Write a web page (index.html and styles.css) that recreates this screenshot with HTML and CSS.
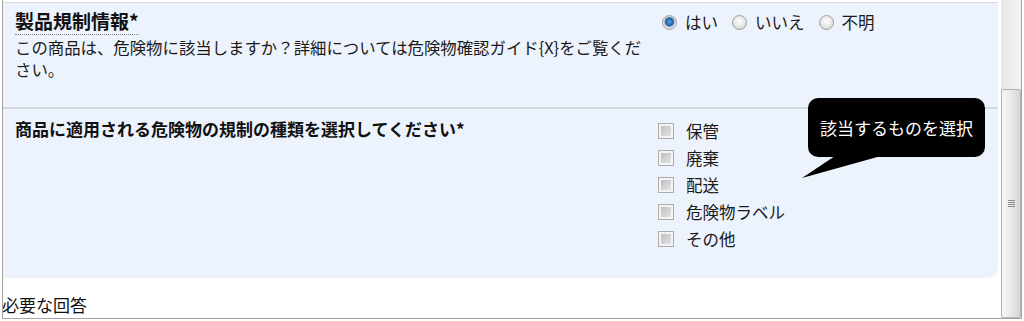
FILE: index.html
```html
<!DOCTYPE html>
<html lang="ja">
<head>
  <meta charset="UTF-8">
  <meta name="viewport" content="width=device-width, initial-scale=1.0">
  <title>製品規制情報</title>
  <link rel="stylesheet" href="styles.css">
</head>
<body>
  <div class="frame">
    <div class="content">
      <!-- Dangerous goods question -->
      <div class="section section-info">
        <div class="field-label">
          <h2 class="field-title"><span class="term">製品規制情報*</span></h2>
          <p class="field-help">この商品は、危険物に該当しますか？詳細については危険物確認ガイド{X}をご覧ください。</p>
        </div>
        <div class="field-input radio-group">
          <label class="choice"><input type="radio" name="dg" checked>はい</label>
          <label class="choice"><input type="radio" name="dg">いいえ</label>
          <label class="choice"><input type="radio" name="dg">不明</label>
        </div>
      </div>

      <!-- Regulation types -->
      <div class="section section-types">
        <div class="field-label">
          <h2 class="field-title">商品に適用される危険物の規制の種類を選択してください*</h2>
        </div>
        <div class="field-input check-list">
          <label class="check"><input type="checkbox">保管</label>
          <label class="check"><input type="checkbox">廃棄</label>
          <label class="check"><input type="checkbox">配送</label>
          <label class="check"><input type="checkbox">危険物ラベル</label>
          <label class="check"><input type="checkbox">その他</label>
        </div>
      </div>

      <p class="required-note">必要な回答</p>

      <!-- Callout -->
      <div class="tooltip">
        該当するものを選択
        <svg class="tooltip-tail" width="90" height="24" viewBox="0 0 90 24">
          <polygon points="38,0 84,0 5,22" fill="#000"/>
        </svg>
      </div>
    </div>

    <div class="scrollbar">
      <div class="scroll-thumb"><span class="grip"></span></div>
    </div>
  </div>
</body>
</html>
```

FILE: styles.css
```css
html, body {
  margin: 0;
  padding: 0;
  background: #fff;
}
body {
  font-family: "Noto Sans CJK JP", "Noto Sans", sans-serif;
  color: #1a1a1a;
  font-size: 16px;
}
.frame {
  box-sizing: border-box;
  margin-left: 2px;
  width: 1020px;
  height: 319px;
  border-left: 1px solid #a3a3a3;
  border-right: 1px solid #a3a3a3;
  border-bottom: 1px solid #a3a3a3;
  display: flex;
  overflow: hidden;
}
.content {
  position: relative;
  flex: 1;
  padding-top: 2px;
}
.section {
  display: grid;
  grid-template-columns: 643px 1fr;
  background: #edf3fd;
  padding-left: 12px;
  margin-right: 3px;
}
.section-info {
  border-top: 1px solid #d6dbe1;
  border-bottom: 2px solid #d3d8df;
  height: 104px;
  box-sizing: content-box;
}
.section-types {
  height: 169px;
  border-bottom-right-radius: 10px;
}
.field-title {
  margin: 0;
  font-size: 17px;
  font-weight: bold;
  line-height: 22px;
  color: #111;
}
.section-info .field-title {
  font-size: 19px;
  padding-top: 7px;
  margin-bottom: 4px;
}
.section-types .field-title {
  padding-top: 9px;
}
.term {
  border-bottom: 1px dotted #8a8a8a;
}
.field-help {
  margin: 0;
  font-size: 16.4px;
  line-height: 22px;
  width: 636px;
}
.radio-group {
  display: flex;
  align-items: center;
  height: 22px;
  padding-top: 8px;
  padding-left: 4px;
}
.choice {
  display: flex;
  align-items: center;
  margin-right: 14px;
  font-size: 16.5px;
  line-height: 22px;
}
.choice input {
  appearance: none;
  -webkit-appearance: none;
  margin: 0 8px 0 0;
  width: 15px;
  height: 15px;
  border-radius: 50%;
  border: 1px solid #a0a0a0;
  box-sizing: border-box;
  background: radial-gradient(circle at 50% 40%, #fdfdfd 0%, #e6e6e6 55%, #c6c6c6 100%);
}
.choice input:checked {
  background: radial-gradient(circle at 50% 45%, #5aa6e3 0%, #1d5c9c 40%, #9fb3c6 50%, #e8e8e8 65%, #c6c6c6 100%);
}
.check-list {
  display: flex;
  flex-direction: column;
  padding-top: 8px;
}
.check {
  display: flex;
  align-items: center;
  height: 27px;
  font-size: 16.5px;
  line-height: 22px;
}
.check input {
  appearance: none;
  -webkit-appearance: none;
  margin: 0 12px 0 0;
  width: 16px;
  height: 16px;
  box-sizing: border-box;
  border: 1px solid #acacac;
  background: linear-gradient(135deg, #b6b6b6 0%, #d2d2d2 50%, #ebebeb 100%);
  box-shadow: inset 0 0 0 2px #f4f4f4;
}
.required-note {
  margin: 16px 0 0 -1px;
  font-size: 17px;
  line-height: 22px;
  color: #111;
}
.tooltip {
  position: absolute;
  left: 805px;
  top: 98px;
  width: 177px;
  height: 59px;
  background: #000;
  border-radius: 10px;
  color: #fff;
  font-size: 17px;
  line-height: 59px;
  text-align: center;
}
.tooltip-tail {
  position: absolute;
  left: -11px;
  top: 58px;
}
.scrollbar {
  width: 20px;
  background: linear-gradient(to right, #e6e6e6, #f3f3f3);
  display: flex;
  flex-direction: column;
  justify-content: flex-end;
}
.scroll-thumb {
  height: 229px;
  box-sizing: border-box;
  border: 1px solid #b3b3b3;
  border-radius: 2px;
  background: linear-gradient(to right, #f6f6f6 0%, #e9e9e9 50%, #d4d4d4 100%);
  display: flex;
  align-items: center;
  justify-content: center;
}
.grip {
  width: 7px;
  height: 7px;
  background: repeating-linear-gradient(to bottom, #8c8c8c 0 1px, transparent 1px 2px);
}
```
